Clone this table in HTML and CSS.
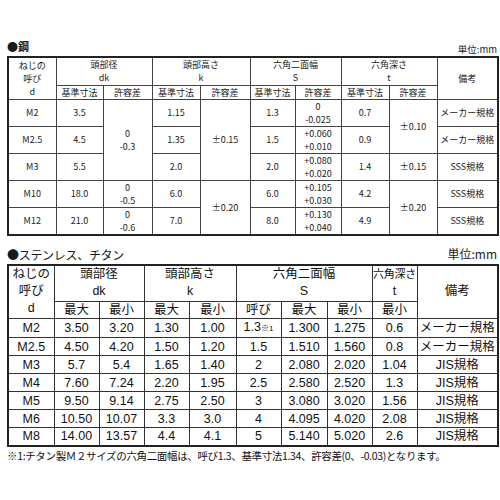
FILE: index.html
```html
<!DOCTYPE html>
<html lang="ja">
<head>
<meta charset="utf-8">
<link rel="stylesheet" href="styles.css">
</head>
<body>
<div class="page">
  <div class="cap cap-steel">
    <span class="title title-steel">●鋼</span>
    <span class="unit unit-steel">単位:mm</span>
  </div>
  <table class="tbl steel">
    <colgroup>
      <col style="width:48px"><col style="width:47px"><col style="width:49px"><col style="width:48px"><col style="width:50px"><col style="width:45px"><col style="width:46px"><col style="width:48px"><col style="width:48px"><col style="width:61px">
    </colgroup>
    <tr class="h1">
      <td rowspan="2">ねじの<br>呼び<br>d</td>
      <td colspan="2">頭部径<br>dk</td>
      <td colspan="2">頭部高さ<br>k</td>
      <td colspan="2">六角二面幅<br>S</td>
      <td colspan="2">六角深さ<br>t</td>
      <td rowspan="2">備考</td>
    </tr>
    <tr class="h2">
      <td>基準寸法</td><td>許容差</td><td>基準寸法</td><td>許容差</td><td>基準寸法</td><td>許容差</td><td>基準寸法</td><td>許容差</td>
    </tr>
    <tr class="r">
      <td>M2</td><td>3.5</td><td rowspan="3">0<br>-0.3</td><td>1.15</td><td rowspan="3">±0.15</td><td>1.3</td><td>0<br>-0.025</td><td>0.7</td><td rowspan="2">±0.10</td><td>メーカー規格</td>
    </tr>
    <tr class="r">
      <td>M2.5</td><td>4.5</td><td>1.35</td><td>1.5</td><td>+0.060<br>+0.010</td><td>0.9</td><td>メーカー規格</td>
    </tr>
    <tr class="r">
      <td>M3</td><td>5.5</td><td>2.0</td><td>2.0</td><td>+0.080<br>+0.020</td><td>1.4</td><td>±0.15</td><td>SSS規格</td>
    </tr>
    <tr class="r">
      <td>M10</td><td>18.0</td><td>0<br>-0.5</td><td>6.0</td><td rowspan="2">±0.20</td><td>6.0</td><td>+0.105<br>+0.030</td><td>4.2</td><td rowspan="2">±0.20</td><td>SSS規格</td>
    </tr>
    <tr class="r">
      <td>M12</td><td>21.0</td><td>0<br>-0.6</td><td>7.0</td><td>8.0</td><td>+0.130<br>+0.040</td><td>4.9</td><td>SSS規格</td>
    </tr>
  </table>

  <div class="cap cap-sus">
    <span class="title title-sus">●ステンレス、チタン</span>
    <span class="unit unit-sus">単位:mm</span>
  </div>
  <table class="tbl sus">
    <colgroup>
      <col style="width:46px"><col style="width:45px"><col style="width:45px"><col style="width:45px"><col style="width:47px"><col style="width:45px"><col style="width:46px"><col style="width:45px"><col style="width:45px"><col style="width:81px">
    </colgroup>
    <tr class="h1">
      <td rowspan="2">ねじの<br>呼び<br>d</td>
      <td colspan="2">頭部径<br>dk</td>
      <td colspan="2">頭部高さ<br>k</td>
      <td colspan="3">六角二面幅<br>S</td>
      <td><span class="tight">六角深さ</span><br>t</td>
      <td rowspan="2">備考</td>
    </tr>
    <tr class="h2">
      <td>最大</td><td>最小</td><td>最大</td><td>最小</td><td>呼び</td><td>最大</td><td>最小</td><td>最小</td>
    </tr>
    <tr class="r"><td>M2</td><td>3.50</td><td>3.20</td><td>1.30</td><td>1.00</td><td>1.3<span class="ref">※1</span></td><td>1.300</td><td>1.275</td><td>0.6</td><td>メーカー規格</td></tr>
    <tr class="r"><td>M2.5</td><td>4.50</td><td>4.20</td><td>1.50</td><td>1.20</td><td>1.5</td><td>1.510</td><td>1.560</td><td>0.8</td><td>メーカー規格</td></tr>
    <tr class="r"><td>M3</td><td>5.7</td><td>5.4</td><td>1.65</td><td>1.40</td><td>2</td><td>2.080</td><td>2.020</td><td>1.04</td><td>JIS規格</td></tr>
    <tr class="r"><td>M4</td><td>7.60</td><td>7.24</td><td>2.20</td><td>1.95</td><td>2.5</td><td>2.580</td><td>2.520</td><td>1.3</td><td>JIS規格</td></tr>
    <tr class="r"><td>M5</td><td>9.50</td><td>9.14</td><td>2.75</td><td>2.50</td><td>3</td><td>3.080</td><td>3.020</td><td>1.56</td><td>JIS規格</td></tr>
    <tr class="r"><td>M6</td><td>10.50</td><td>10.07</td><td>3.3</td><td>3.0</td><td>4</td><td>4.095</td><td>4.020</td><td>2.08</td><td>JIS規格</td></tr>
    <tr class="r"><td>M8</td><td>14.00</td><td>13.57</td><td>4.4</td><td>4.1</td><td>5</td><td>5.140</td><td>5.020</td><td>2.6</td><td>JIS規格</td></tr>
  </table>
  <p class="note">※1:チタン製Ｍ２サイズの六角二面幅は、呼び1.3、基準寸法1.34、許容差(0、-0.03)となります。</p>
</div>
</body>
</html>
```

FILE: styles.css
```css
html, body {
  margin: 0;
  padding: 0;
  background: #fff;
}

.page {
  width: 490px;
  padding-left: 7px;
  color: #1a1a1a;
  font-family: "Noto Sans CJK JP", "Noto Sans", sans-serif;
}

.cap {
  display: flex;
  justify-content: space-between;
  align-items: flex-end;
}

.cap-steel {
  height: 56px;
}

.cap-sus {
  height: 28px;
}

.title-steel {
  font-size: 11px;
  font-weight: bold;
  line-height: 14px;
  padding-bottom: 3px;
}

.unit-steel {
  font-size: 9.5px;
  line-height: 12px;
  padding-bottom: 1px;
}

.title-sus {
  font-size: 12px;
  line-height: 14px;
  padding-bottom: 2px;
  letter-spacing: -0.3px;
}

.unit-sus {
  font-size: 12px;
  line-height: 14px;
  padding-bottom: 3px;
}

.tbl {
  border-collapse: collapse;
  table-layout: fixed;
  width: 490px;
  border: 2px solid #222;
}

.tbl td {
  padding: 0;
  text-align: center;
  vertical-align: middle;
  border: 1px solid #444;
  white-space: nowrap;
  overflow: hidden;
}

.steel td {
  font-size: 9px;
  line-height: 13px;
  color: #222;
}

.steel .h1 {
  height: 28px;
}

.steel .h2 {
  height: 14px;
}

.steel .r {
  height: 27px;
}

.sus td {
  font-family: "Liberation Sans", "Noto Sans CJK JP", sans-serif;
  font-size: 12.5px;
  color: #111;
  border-color: #333;
}

.sus .h1 td {
  line-height: 17px;
}

.sus .h1 {
  height: 37px;
}

.sus .h2 {
  height: 17px;
  line-height: 15px;
}

.sus .r {
  height: 18px;
  line-height: 16px;
}

.tight {
  font-size: 11px;
  letter-spacing: -0.2px;
}

.ref {
  font-size: 8px;
}

.note {
  margin: 2px 0 0 0;
  font-size: 10.5px;
  line-height: 14px;
  letter-spacing: -0.35px;
  color: #111;
  white-space: nowrap;
}
```
